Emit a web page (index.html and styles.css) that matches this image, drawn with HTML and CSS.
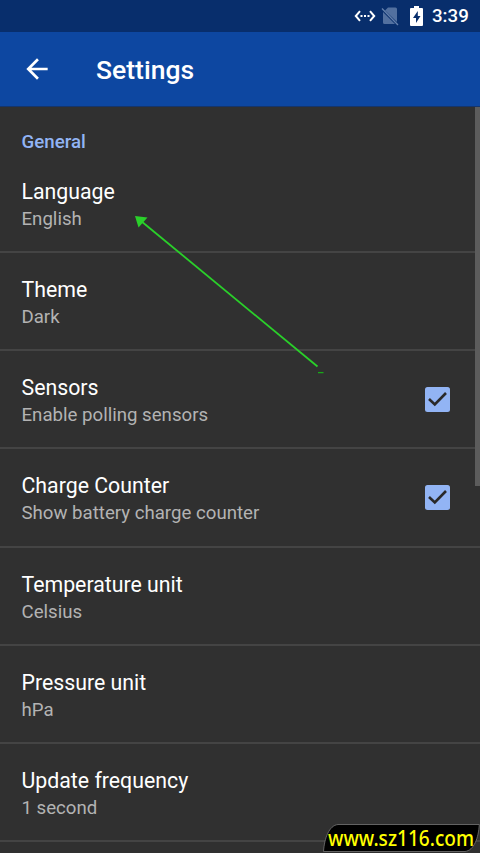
FILE: index.html
```html
<!DOCTYPE html>
<html lang="en">
<head>
<meta charset="utf-8">
<title>Settings</title>
<link rel="stylesheet" href="styles.css">
</head>
<body>
<div class="screen">
  <div class="status">
    <svg class="net" viewBox="0 0 22 14" width="22" height="14"><path d="M6 2.200 1.800 7 6 11.800M16 2.200 20.200 7 16 11.800" fill="none" stroke="#fff" stroke-width="2"/><path d="M6.500 6h2v2h-2zM10 6h2v2h-2zM13.500 6h2v2h-2z" fill="#fff"/></svg>
    <svg class="sim" viewBox="0 0 18 20" width="18" height="20"><path d="M7 1.500h7.500q1.500 0 1.500 1.500v13L4 4.500zM2 6 14 18H3.500Q2 18 2 16.500z" fill="#52709f"/><path d="M1 2.500 17 19" stroke="#6682ad" stroke-width="1.300"/></svg>
    <svg class="battery" viewBox="0 0 13 20" width="13" height="20"><path d="M4 0h5v2h3q1 0 1 1v16q0 1-1 1H1q-1 0-1-1V3q0-1 1-1h3z" fill="#fff"/><path d="M7.800 5 3 12h3v5l4.500-7H7.800z" fill="#082e6c"/></svg>
    <span class="clock">3:39</span>
  </div>
  <header class="bar">
    <svg class="back" viewBox="0 0 24 24" width="32" height="32"><path d="M20 11H7.830l5.590-5.590L12 4l-8 8 8 8 1.410-1.410L7.830 13H20z" fill="#fff"/></svg>
    <h1 class="heading">Settings</h1>
  </header>
  <main class="list">
    <h2 class="section">General</h2>
    <div class="row"><div><div class="name">Language</div><div class="value">English</div></div></div>
    <div class="row"><div><div class="name">Theme</div><div class="value">Dark</div></div></div>
    <div class="row"><div><div class="name">Sensors</div><div class="value">Enable polling sensors</div></div>
      <svg class="check" viewBox="0 0 25 25" width="25" height="25"><rect width="25" height="25" rx="2.500" fill="#92b4f4"/><path d="M4 12l5.800 5.500L21 6" fill="none" stroke="#292929" stroke-width="2.600"/></svg></div>
    <div class="row"><div><div class="name">Charge Counter</div><div class="value">Show battery charge counter</div></div>
      <svg class="check" viewBox="0 0 25 25" width="25" height="25"><rect width="25" height="25" rx="2.500" fill="#92b4f4"/><path d="M4 12l5.800 5.500L21 6" fill="none" stroke="#292929" stroke-width="2.600"/></svg></div>
    <div class="row"><div><div class="name">Temperature unit</div><div class="value">Celsius</div></div></div>
    <div class="row"><div><div class="name">Pressure unit</div><div class="value">hPa</div></div></div>
    <div class="row"><div><div class="name">Update frequency</div><div class="value">1 second</div></div></div>
    <div class="scrollbar"></div>
  </main>
  <svg class="arrow" viewBox="0 0 190 162" width="190" height="162"><path d="M11 6 187.500 151.500" stroke="#2ad02a" stroke-width="1.800"/><path d="M5 1 17.500 2.500 8.500 12.500z" fill="#2ad02a"/><path d="M188 157.600h5.500" stroke="#18a818" stroke-width="1.300"/></svg>
  <svg class="mark" viewBox="0 0 157 29" width="157" height="29"><path d="M.5 27.500C1.500 14 6 1.500 15 .5H156.300C155.500 14 151 26.500 142 27.500z" fill="#000" stroke="#777" stroke-width=".8"/><text class="site" x="5" y="22" textLength="146" lengthAdjust="spacingAndGlyphs">www.sz116.com</text></svg>
</div>
</body>
</html>
```
FILE: styles.css
```css
* { box-sizing: border-box; }
body { margin: 0; background: #303030; font-family: Roboto, sans-serif; }
.screen { position: relative; width: 480px; height: 853px; overflow: hidden; background: #303030; }
.status { height: 32px; background: #082e6c; display: flex; align-items: center; justify-content: flex-end; padding-right: 11px; color: #fff; }
.sim { margin-left: 5px; }
.battery { margin-left: 11px; }
.clock { margin-left: 9px; font-size: 18.7px; font-weight: 500; line-height: 34px; width: 37px; white-space: nowrap; }
.bar { height: 75px; background: #0d47a1; display: flex; align-items: center; padding-left: 21px; border-bottom: 1px solid #15356b; }
.heading { margin: 2px 0 0 43px; font-size: 26.5px; font-weight: 500; line-height: 34px; color: #fff; }
.list { position: relative; }
.section { margin: 0; padding: 23px 0 0 21.500px; height: 48px; font-size: 18.7px; line-height: 24px; font-weight: 500; color: #92b4f4; }
.row { height: 98.15px; padding: 22px 30px 0 21.500px; display: flex; justify-content: space-between; border-bottom: 2px solid #444; }
.name { font-size: 21.3px; line-height: 29px; color: #fff; }
.value { margin-top: 1px; font-size: 18.65px; line-height: 25px; color: #b3b3b3; }
.check { margin-top: 14px; }
.scrollbar { position: absolute; right: 0; top: 0; width: 5px; height: 379px; background: #5c5c5c; }
.arrow { position: absolute; left: 130px; top: 215px; overflow: visible; }
.mark { position: absolute; left: 323px; top: 824px; }
.site { font-family: "Noto Sans", sans-serif; font-size: 21px; font-weight: 500; fill: #ff0; }
```
